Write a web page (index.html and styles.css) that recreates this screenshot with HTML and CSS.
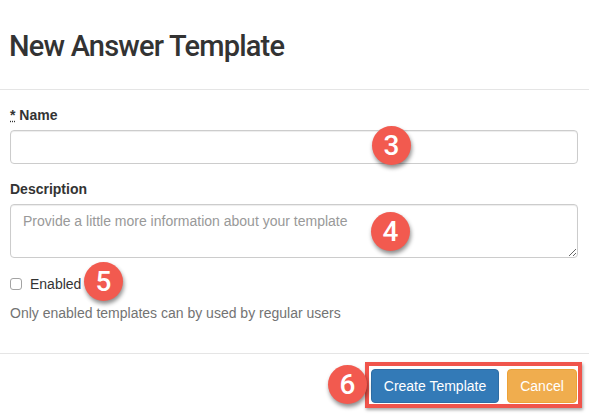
FILE: index.html
```html
<!DOCTYPE html>
<html>
<head>
<meta charset="utf-8">
<link rel="stylesheet" href="styles.css">
</head>
<body>
<div class="modal">
  <div class="modal-header">
    <h3 class="modal-title">New Answer Template</h3>
  </div>
  <div class="modal-body">
    <div class="form-group">
      <label class="label"><abbr class="req" title="required">*</abbr> Name</label>
      <input class="form-control" type="text">
    </div>
    <div class="form-group">
      <label class="label">Description</label>
      <textarea class="form-control textarea" placeholder="Provide a little more information about your template"></textarea>
    </div>
    <div class="checkbox">
      <label class="check-label"><input type="checkbox" class="check"> Enabled</label>
    </div>
    <p class="help">Only enabled templates can by used by regular users</p>
  </div>
  <div class="modal-footer">
    <div class="highlight">
      <button class="btn btn-primary">Create Template</button>
      <button class="btn btn-warning">Cancel</button>
    </div>
  </div>
  <span class="badge b3">3</span>
  <span class="badge b4">4</span>
  <span class="badge b5">5</span>
  <span class="badge b6">6</span>
</div>
</body>
</html>
```
FILE: styles.css
```css
* { box-sizing: border-box; }
html, body { margin: 0; padding: 0; background: #fff; }
body {
  font-family: "Liberation Sans", Arial, sans-serif;
  font-size: 14px;
  line-height: 20px;
  color: #333;
}
.modal { position: relative; width: 589px; height: 416px; overflow: hidden; }
.modal-header {
  padding: 30px 10px 26px 9px;
  border-bottom: 1px solid #e5e5e5;
}
.modal-title {
  margin: 0;
  font-family: Roboto, "Liberation Sans", Arial, sans-serif;
  font-size: 29px;
  line-height: 33px;
  font-weight: 500;
  letter-spacing: -0.8px;
  color: #333;
}
.modal-body { padding: 15px 11px 0 10px; }
.form-group { margin-bottom: 15px; }
.label {
  display: block;
  font-weight: bold;
  margin-bottom: 5px;
  height: 20px;
}
.req { text-decoration: underline dotted; cursor: help; }
.form-control {
  display: block;
  width: 100%;
  height: 34px;
  margin: 0;
  padding: 6px 12px;
  font-family: "Liberation Sans", Arial, sans-serif;
  font-size: 14px;
  line-height: 20px;
  color: #555;
  background: #fff;
  border: 1px solid #ccc;
  border-radius: 4px;
  box-shadow: inset 0 1px 1px rgba(0,0,0,.075);
}
.textarea { height: 54px; resize: vertical; }
.form-control::placeholder { color: #999; }
.checkbox { margin-top: 16px; height: 20px; }
.check-label { display: flex; align-items: center; gap: 8px; }
.check {
  appearance: none;
  -webkit-appearance: none;
  width: 12px;
  height: 12px;
  margin: 0;
  border: 1px solid #a3a3a3;
  border-radius: 3px;
  background: #fff;
}
.help { margin: 9px 0 0; color: #737373; }
.modal-footer {
  position: absolute;
  left: 0; right: 0; top: 353px;
  border-top: 1px solid #e5e5e5;
  padding: 8px 7px 0 0;
  display: flex;
  justify-content: flex-end;
}
.highlight {
  display: flex;
  gap: 8px;
  border: 4px solid #f0544b;
  padding: 3px 1px 1px 2px;
  background: #fff;
  box-shadow: 1px 2px 3px rgba(0,0,0,.35);
}
.btn {
  height: 34px;
  padding: 6px 0;
  font-family: "Liberation Sans", Arial, sans-serif;
  font-size: 14px;
  line-height: 20px;
  color: #fff;
  white-space: nowrap;
  text-align: center;
  border: 1px solid transparent;
  border-radius: 4px;
}
.btn-primary { background: #337ab7; border-color: #2e6da4; width: 128px; }
.btn-warning { background: #f0ad4e; border-color: #eea236; width: 70px; }
.badge {
  position: absolute;
  width: 39px;
  height: 39px;
  border-radius: 50%;
  background: #f25a4f;
  color: #fff;
  font-family: Roboto, "Liberation Sans", Arial, sans-serif;
  font-weight: 500;
  font-size: 28px;
  line-height: 39px;
  text-align: center;
  box-shadow: 1px 3px 4px rgba(0,0,0,.45);
}
.b3 { left: 372px; top: 126px; }
.b4 { left: 371px; top: 212px; }
.b5 { left: 84px; top: 262px; }
.b6 { left: 328px; top: 365px; }
```
